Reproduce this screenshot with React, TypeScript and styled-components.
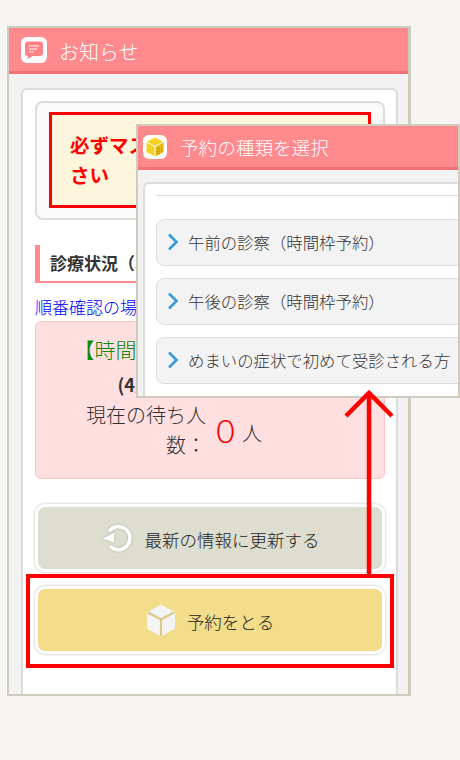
import styled, { createGlobalStyle } from 'styled-components';

const GlobalStyle = createGlobalStyle`
  html, body {
    margin: 0;
    padding: 0;
    background: #f6f5f3;
  }
  * {
    box-sizing: border-box;
  }
`;

const Page = styled.div`
  position: relative;
  width: 460px;
  height: 760px;
  padding: 26px 0 0 7px;
  overflow: hidden;
  font-family: "Noto Sans CJK JP", "Noto Sans", sans-serif;
  font-weight: 300;
  color: #333;
`;

const Window = styled.section`
  width: 404px;
  height: 670px;
  border: 2px solid #cfccbf;
  border-right-width: 3px;
  background: #f2f2f2;
  display: flex;
  flex-direction: column;
`;

const TitleBar = styled.header<{ $small?: boolean }>`
  flex: none;
  height: ${p => (p.$small ? '44px' : '46px')};
  background: #ff8a8e;
  border-bottom: 3px solid #f47277;
  display: flex;
  align-items: center;
  gap: ${p => (p.$small ? '13px' : '12px')};
  padding-left: ${p => (p.$small ? '5px' : '12px')};
  color: #fff;
  font-size: ${p => (p.$small ? '18.6px' : '20px')};
  line-height: 1;
`;

const TitleText = styled.span<{ $small?: boolean }>`
  margin-top: ${p => (p.$small ? '1px' : '4px')};
`;

const IconTile = styled.span<{ $size: number }>`
  width: ${p => p.$size}px;
  height: ${p => p.$size}px;
  background: #fff;
  border-radius: 6px;
  display: flex;
  align-items: center;
  justify-content: center;
  flex: none;
`;

const Panel = styled.div`
  flex: 1;
  margin: 14px 10px 0 12px;
  padding: 11px 11px 0 12px;
  background: #fff;
  border: 2px solid #dcdcdc;
  border-bottom: none;
  border-radius: 6px 6px 0 0;
`;

const NoticeFrame = styled.div`
  height: 119px;
  padding: 9px 12px;
  background: #fafafa;
  border: 2px solid #dcdcd8;
  border-radius: 8px;
`;

const NoticeBox = styled.div`
  height: 96px;
  padding: 15px 18px;
  background: #fdf6dc;
  border: 3px solid #f00;
  color: #f00;
  font-size: 19.5px;
  font-weight: 700;
  line-height: 30px;
`;

const SectionTitle = styled.h2`
  margin: 25px 0 0;
  height: 38px;
  border-left: 5px solid #ff8a8e;
  border-bottom: 2px solid #ff8a8e;
  padding-left: 10px;
  color: #333;
  font-size: 17px;
  font-weight: 700;
  line-height: 35px;
  white-space: nowrap;
`;

const BlueLink = styled.a`
  display: block;
  margin-top: 14px;
  height: 24px;
  color: #00f;
  font-size: 17px;
  line-height: 20px;
  text-decoration: none;
  white-space: nowrap;
`;

const StatusBox = styled.div`
  height: 158px;
  padding-top: 10px;
  background: #ffdfe0;
  border: 1px solid #ffc4c6;
  border-radius: 6px;
  text-align: center;
`;

const StatusName = styled.div`
  color: #0a8a0a;
  font-size: 21px;
  line-height: 34px;
  white-space: nowrap;
`;

const StatusTime = styled.div`
  color: #333;
  font-size: 18px;
  font-weight: 700;
  line-height: 26px;
  margin-top: 5px;
  padding-left: 6px;
  white-space: nowrap;
`;

const WaitRow = styled.div`
  display: flex;
  justify-content: center;
  align-items: center;
  margin-top: 3px;
  margin-right: 74px;
`;

const WaitLabel = styled.div`
  width: 122px;
  font-size: 20px;
  line-height: 30px;
  text-align: right;
`;

const WaitCount = styled.span`
  margin: 0 1px 0 4px;
  color: #f00;
  font-size: 31px;
  line-height: 42px;
`;

const WaitUnit = styled.span`
  margin-top: 6px;
  font-size: 20px;
  line-height: 34px;
`;

const ActionButton = styled.button<{ $bg: string; $gap: number }>`
  display: flex;
  align-items: center;
  justify-content: center;
  gap: ${p => p.$gap}px;
  width: 350px;
  height: 68px;
  padding: 0;
  background: ${p => p.$bg};
  border: 3px solid #fff;
  border-radius: 10px;
  box-shadow: 0 0 3px #bdbdb5;
  color: #222;
  font-family: inherit;
  font-weight: 300;
  font-size: 17.5px;
  line-height: 1;
`;

const ButtonText = styled.span`
  margin-top: 3px;
`;

const Actions = styled.div`
  display: flex;
  flex-direction: column;
  gap: 14px;
  margin-top: 25px;
`;

const ReserveHighlight = styled.div`
  position: absolute;
  left: 26px;
  top: 574px;
  width: 368px;
  height: 94px;
  border: 4px solid #f00;
  pointer-events: none;
`;

const ArrowLayer = styled.svg`
  position: absolute;
  left: 340px;
  top: 388px;
`;

const Popup = styled.section`
  position: absolute;
  left: 136px;
  top: 124px;
  width: 324px;
  height: 274px;
  border: 2px solid #cfccbf;
  background: #f2f2f2;
  display: flex;
  flex-direction: column;
  overflow: hidden;
`;

const PopupPanel = styled.div`
  flex: 1;
  width: 340px;
  margin: 12px 0 0 5px;
  padding: 11px 0 0 11px;
  background: #fff;
  border: 2px solid #dcdcdc;
  border-bottom: none;
  border-radius: 6px 0 0 0;
`;

const Rule = styled.hr`
  margin: 0 0 23px;
  border: none;
  border-top: 1px solid #ddd;
`;

const OptionList = styled.div`
  display: flex;
  flex-direction: column;
  gap: 12px;
`;

const OptionItem = styled.div`
  display: flex;
  align-items: center;
  gap: 9px;
  height: 47px;
  padding: 0 0 2px 10px;
  background: #f3f3f3;
  border: 1px solid #dedede;
  border-radius: 8px;
  color: #333;
  font-size: 16.4px;
  font-weight: 300;
  white-space: nowrap;
`;

const BubbleIcon = () => (
  <svg width="20" height="20" viewBox="0 0 20 20">
    <path d="M4 1.500h12a3 3 0 0 1 3 3v8.500a3 3 0 0 1-3 3H8.500L3.500 19l.5-3a3 3 0 0 1-3-3V4.500a3 3 0 0 1 3-3z" fill="#ff8085" />
    <path d="M5 6h10M5 9h8M5 12h5" stroke="#ffd2d4" strokeWidth="1.500" fill="none" />
  </svg>
);

const BoxIcon = () => (
  <svg width="20" height="20" viewBox="0 0 20 20">
    <path d="M10 .5l8.500 4.500v10L10 19.500 1.500 15V5z" fill="#f6d21f" />
    <path d="M10 9.500l8.500-4.500v10L10 19.500z" fill="#e3bc18" />
    <path d="M10 9.500L1.500 5M10 9.500l8.500-4.500M10 9.500v10" stroke="#fff" strokeWidth="1" fill="none" />
    <path d="M12 11.500h5M12 14h5M12 16.500h4" stroke="#8b7a20" strokeWidth="1.200" strokeDasharray="1 1" fill="none" />
  </svg>
);

const ChevronIcon = () => (
  <svg width="12" height="18" viewBox="0 0 12 18">
    <path d="M2 1.500l7.500 7.500L2 16.500" stroke="#3a9ad9" strokeWidth="2.600" fill="none" />
  </svg>
);

const ReloadIcon = () => (
  <svg width="33" height="33" viewBox="0 0 33 33" style={{ filter: 'drop-shadow(0 0 1px #a8a89c)' }}>
    <path d="M8 9.500A11.500 11.500 0 1 1 9 24" stroke="#fff" strokeWidth="3.500" fill="none" />
    <path d="M2 16.500L13.500 10.500 13 20.500z" fill="#fff" />
  </svg>
);

const CubeIcon = () => (
  <svg width="30" height="33" viewBox="0 0 30 33">
    <path d="M15 1l13.500 7.500v16L15 32 1.500 24.500v-16z" fill="#f4f4f2" stroke="#f4f4f2" strokeLinejoin="round" />
    <path d="M2 8.500L15 15.500 28 8.500M15 15.500V32" stroke="#dcc98a" strokeWidth="2.200" fill="none" />
  </svg>
);

export default function App() {
  return (
    <Page>
      <GlobalStyle />
      <Window>
        <TitleBar>
          <IconTile $size={26}>
            <BubbleIcon />
          </IconTile>
          <TitleText>お知らせ</TitleText>
        </TitleBar>
        <Panel>
          <NoticeFrame>
            <NoticeBox>必ずマスクを着用して来院ください</NoticeBox>
          </NoticeFrame>
          <SectionTitle>診療状況（本日）</SectionTitle>
          <BlueLink href="#">順番確認の場合はこちらをクリック</BlueLink>
          <StatusBox>
            <StatusName>【時間枠予約診察の受付中】</StatusName>
            <StatusTime>(4月1日(月) 10:00現在)</StatusTime>
            <WaitRow>
              <WaitLabel>現在の待ち人数：</WaitLabel>
              <WaitCount>０</WaitCount>
              <WaitUnit>人</WaitUnit>
            </WaitRow>
          </StatusBox>
          <Actions>
            <ActionButton $bg="#deded0" $gap={11}>
              <ReloadIcon />
              <ButtonText>最新の情報に更新する</ButtonText>
            </ActionButton>
            <ActionButton $bg="#f3dc8a" $gap={11}>
              <CubeIcon />
              <ButtonText>予約をとる</ButtonText>
            </ActionButton>
          </Actions>
        </Panel>
      </Window>

      <Popup>
        <TitleBar $small>
          <IconTile $size={24}>
            <BoxIcon />
          </IconTile>
          <TitleText $small>予約の種類を選択</TitleText>
        </TitleBar>
        <PopupPanel>
          <Rule />
          <OptionList>
            <OptionItem>
              <ChevronIcon />
              午前の診察（時間枠予約）
            </OptionItem>
            <OptionItem>
              <ChevronIcon />
              午後の診察（時間枠予約）
            </OptionItem>
            <OptionItem>
              <ChevronIcon />
              めまいの症状で初めて受診される方
            </OptionItem>
          </OptionList>
        </PopupPanel>
      </Popup>

      <ReserveHighlight />
      <ArrowLayer width="60" height="190" viewBox="0 0 60 190">
        <path d="M29 4V186" stroke="#f00" strokeWidth="4.500" fill="none" />
        <path d="M6 28L29 5l23 23" stroke="#f00" strokeWidth="4.500" fill="none" />
      </ArrowLayer>
    </Page>
  );
}
